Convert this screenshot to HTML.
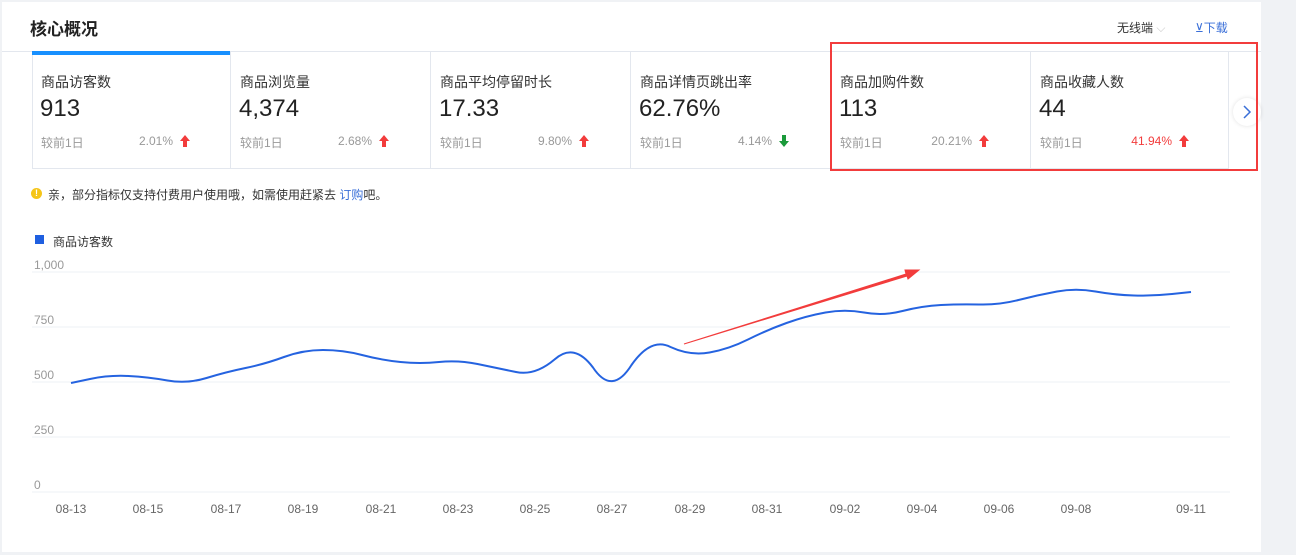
<!DOCTYPE html>
<html><head><meta charset="utf-8"><style>
*{margin:0;padding:0;box-sizing:border-box}
body{width:1296px;height:555px;background:#f0f2f5;font-family:"Liberation Sans","Noto Sans CJK SC",sans-serif;position:relative;overflow:hidden}
.panel{position:absolute;left:2px;top:2px;width:1259px;height:550px;background:#fff}
.abs{position:absolute;white-space:nowrap}
.card{position:absolute;top:51px;width:200px;height:118px;border-right:1px solid #e3e7ee;border-bottom:1px solid #e3e7ee}
.card .t{position:absolute;left:9px;top:21px;font-size:14px;color:#333}
.card .v{position:absolute;left:8px;top:44px;font-size:24px;color:#222}
.card .c{position:absolute;left:9px;top:83px;font-size:12px;color:#999}
.card .p{position:absolute;right:58px;top:83px;font-size:12px;color:#999}
.card .ar{position:absolute;left:148px;top:84px}
</style></head><body>
<div class="panel"></div>
<div class="abs" style="left:30px;top:15px;font-size:17px;font-weight:bold;color:#222">核心概况</div>
<div class="abs" style="left:1117px;top:19px;font-size:12px;color:#333">无线端 <span style="color:#ccc">⌵</span></div>
<div class="abs" style="left:1195px;top:19px;font-size:12px;color:#3a6fd8">⊻下载</div>
<div class="abs" style="left:2px;top:51px;width:1259px;height:1px;background:#e3e7ee"></div>
<div class="abs" style="left:32px;top:51px;width:1px;height:118px;background:#e3e7ee"></div>

<div class="card" style="left:32px;width:199px"><div class="abs" style="left:0;top:0;width:198px;height:4px;background:#1890ff"></div><div class="t">商品访客数</div><div class="v">913</div><div class="c">较前1日</div><div class="p" style="right:57px">2.01%</div><svg class="ar" width="10" height="12"><path d="M5 0L10 6H7V12H3V6H0Z" fill="#f23c3c"/></svg></div>
<div class="card" style="left:231px"><div class="t">商品浏览量</div><div class="v">4,374</div><div class="c">较前1日</div><div class="p">2.68%</div><svg class="ar" width="10" height="12"><path d="M5 0L10 6H7V12H3V6H0Z" fill="#f23c3c"/></svg></div>
<div class="card" style="left:431px"><div class="t">商品平均停留时长</div><div class="v">17.33</div><div class="c">较前1日</div><div class="p">9.80%</div><svg class="ar" width="10" height="12"><path d="M5 0L10 6H7V12H3V6H0Z" fill="#f23c3c"/></svg></div>
<div class="card" style="left:631px"><div class="t">商品详情页跳出率</div><div class="v">62.76%</div><div class="c">较前1日</div><div class="p">4.14%</div><svg class="ar" width="10" height="12"><path d="M5 12L10 6H7V0H3V6H0Z" fill="#1a9a3a"/></svg></div>
<div class="card" style="left:831px"><div class="t">商品加购件数</div><div class="v">113</div><div class="c">较前1日</div><div class="p">20.21%</div><svg class="ar" width="10" height="12"><path d="M5 0L10 6H7V12H3V6H0Z" fill="#f23c3c"/></svg></div>
<div class="card" style="left:1031px;width:198px"><div class="t">商品收藏人数</div><div class="v">44</div><div class="c">较前1日</div><div class="p" style="color:#f23c3c;right:56px">41.94%</div><svg class="ar" width="10" height="12"><path d="M5 0L10 6H7V12H3V6H0Z" fill="#f23c3c"/></svg></div>
<div class="abs" style="left:1233px;top:98px;width:28px;height:28px;border-radius:50%;background:#fff;box-shadow:0 0 4px rgba(0,0,0,.12)"></div>
<svg class="abs" style="left:1242px;top:104px" width="10" height="16"><path d="M2 2L8 8L2 14" stroke="#3a6fd8" stroke-width="1.5" fill="none"/></svg>
<div class="abs" style="left:830px;top:42px;width:428px;height:129px;border:2px solid #f23c3c"></div>

<div class="abs" style="left:31px;top:188px;width:11px;height:11px;border-radius:50%;background:#f5c518;color:#fff;font-size:9px;text-align:center;line-height:11px;font-weight:bold">!</div>
<div class="abs" style="left:48px;top:186px;font-size:12px;color:#333">亲，部分指标仅支持付费用户使用哦，如需使用赶紧去 <span style="color:#3a6fd8">订购</span>吧。</div>

<div class="abs" style="left:35px;top:235px;width:9px;height:9px;background:#1f5fe0"></div>
<div class="abs" style="left:53px;top:233px;font-size:12px;color:#333">商品访客数</div>

<svg class="abs" style="left:0;top:0" width="1296" height="555">
<g stroke="#eef0f6" stroke-width="1"><line x1="32" y1="272" x2="1230" y2="272"/><line x1="32" y1="327" x2="1230" y2="327"/><line x1="32" y1="382" x2="1230" y2="382"/><line x1="32" y1="437" x2="1230" y2="437"/><line x1="32" y1="492" x2="1230" y2="492"/></g>
<g font-size="12" fill="#999" font-family="Liberation Sans,sans-serif"><text x="34" y="269">1,000</text><text x="34" y="324">750</text><text x="34" y="379">500</text><text x="34" y="434">250</text><text x="34" y="489">0</text></g>
<g font-size="12" fill="#666" font-family="Liberation Sans,sans-serif" text-anchor="middle">
<text x="71" y="513">08-13</text><text x="148" y="513">08-15</text><text x="226" y="513">08-17</text><text x="303" y="513">08-19</text><text x="381" y="513">08-21</text><text x="458" y="513">08-23</text><text x="535" y="513">08-25</text><text x="612" y="513">08-27</text><text x="690" y="513">08-29</text><text x="767" y="513">08-31</text><text x="845" y="513">09-02</text><text x="922" y="513">09-04</text><text x="999" y="513">09-06</text><text x="1076" y="513">09-08</text><text x="1191" y="513">09-11</text></g>
<path d="M71,383 L90,379 Q109,375 128.5,376 Q148,377 167.5,380.5 Q187,384 206.5,378 Q226,372 245.5,368 Q265,364 284,357 Q303,350 323,350 Q343,350 362,355 Q381,360 400.5,362 Q420,364 439,362 Q458,360 477.5,364 Q497,368 516,372 Q535,376 554.5,359.5 Q574,342 593,367.5 Q612,396 631.5,365 Q651,337 670.5,347 Q690,356 709.5,352.5 Q729,349 748,339.5 Q767,330 786.5,323 Q806,316 825.5,312.5 Q845,309 864,312.5 Q883,316 902.5,311 Q922,306 941,305 Q960,304 979.5,304.5 Q999,305 1018.5,300 Q1038,295 1057,291.5 Q1076,288 1095.5,291.5 Q1115,295 1134,295.5 Q1153,296 1172,294 L1191,292" fill="none" stroke="#2563e0" stroke-width="2"/>
<path d="M684,344 L906,274 L905,270 L919,270 L908,279 L907,276 Z" fill="#f23c3c" stroke="#f23c3c" stroke-width="1"/>
</svg>
</body></html>
